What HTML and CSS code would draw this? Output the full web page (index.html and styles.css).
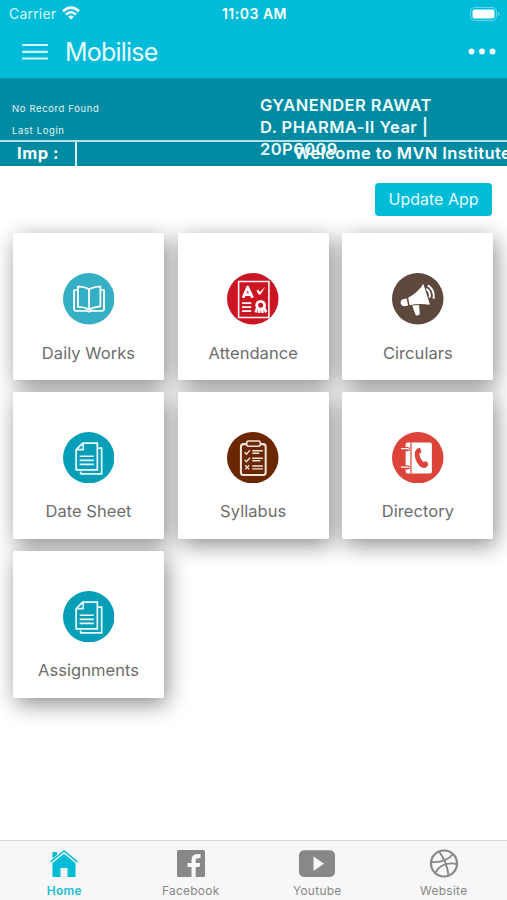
FILE: index.html
```html
<!DOCTYPE html>
<html lang="en">
<head>
<meta charset="utf-8">
<title>Mobilise</title>
<link rel="stylesheet" href="styles.css">
</head>
<body>
<div class="app">
  <header class="top">
    <div class="status">
      <div class="carrier"><span>Carrier</span>
        <svg width="18" height="14" viewBox="0 0 18 14" fill="none" stroke="#fff" stroke-width="2.5"><path d="M1 5.2Q9-2 17 5.2M4 8.5Q9 4 14 8.5"/><path d="M6.2 10.7Q9 8.300 11.800 10.700L9 13.600z" fill="#fff" stroke="none"/></svg>
      </div>
      <span class="clock">11:03 AM</span>
      <svg class="battery" width="30" height="14" viewBox="0 0 30 14"><rect x=".5" y=".5" width="26" height="13" rx="4" fill="none" stroke="#62d8e8"/><rect x="2.500" y="2.500" width="22" height="9" rx="2" fill="#fff"/><path d="M28 5v4q1.500-.5 1.500-2T28 5" fill="#62d8e8"/></svg>
    </div>
    <div class="bar">
      <svg width="26" height="18" viewBox="0 0 26 18" stroke="#d4f8fc" stroke-width="2.200" stroke-linecap="round"><path d="M1 2h24M1 8.800h24M1 15.500h24"/></svg>
      <h1>Mobilise</h1>
      <svg class="more" width="28" height="8" viewBox="0 0 28 8" fill="#fff"><circle cx="3.500" cy="3.500" r="2.900"/><circle cx="14" cy="3.500" r="2.900"/><circle cx="24.500" cy="3.500" r="2.900"/></svg>
    </div>
  </header>
  <section class="info">
    <div class="login"><span>No Record Found</span><span>Last Login</span></div>
    <div class="student"><span class="name">GYANENDER RAWAT</span><span class="course">D. PHARMA-II Year |</span><span class="roll">20P6009</span></div>
  </section>
  <section class="notice">
    <div class="imp">Imp :</div>
    <div class="ticker"><span>Welcome to MVN Institute</span></div>
  </section>
  <main>
    <button class="update">Update App</button>
    <div class="grid">
      <div class="card">
        <svg class="icon" viewBox="0 0 51 51"><circle cx="25.500" cy="25.500" r="25.500" fill="#34afc4"/><g fill="none" stroke="#fff" stroke-width="1.800" stroke-linejoin="round"><path d="M25.800 16Q20 13 14.800 13.500V33.500Q21 33.500 25.800 36Q31 33.500 37 33V13.200Q31 13.500 25.800 16V36M14 17h-3v19q0 1.500 1.500 1.500h11l2.300.8 2.300-.8h11q1.500 0 1.500-1.500V17H38"/></g></svg>
        <span>Daily Works</span>
      </div>
      <div class="card">
        <svg class="icon" viewBox="0 0 51 51"><circle cx="25.500" cy="25.500" r="25.500" fill="#cc1522"/><g fill="none" stroke="#fff"><path d="M11.500 8.500h30v35.500h-30z" stroke-width="1.500"/><path d="M16 24.500 20.500 14 25.300 24.500M18 21.500h5.500" stroke-width="2.800" stroke-linejoin="round"/><path d="M15 29.800h9M15 33.700h9M15 37.700h9" stroke-width="1.700"/><circle cx="33.300" cy="32" r="3.900" stroke-width="2.800"/><path d="M30 34.500l-1.800 4.500M31.800 36v3.500M36.800 34.500l2 4.500M35 36v3.500" stroke-width="2.500"/></g><path d="M29 17.500l2-.8 1.500 2 5.500-5-4.800 7.500h-1.700z" fill="#fff"/></svg>
        <span>Attendance</span>
      </div>
      <div class="card">
        <svg class="icon" viewBox="0 0 51 51"><circle cx="25.500" cy="25.500" r="25.500" fill="#5e483e"/><g fill="#fff"><path d="M16 24.500Q25 20 31 11.200L37.200 31.500Q27 29.500 17.500 32z"/><path d="M14.500 25.200l1.500 7-3.500.7Q9.500 33 8.700 30q-.6-3 2-4z"/><path d="M20 32.300l6.800-.5.700 8.700q-1 2-4 1.300z"/><path d="M30.500 11.500 36.800 31" stroke="#fff" stroke-width="1.200"/></g><path d="M34 15.700Q38.500 18.500 37.200 24.500M35.500 12.300Q42.500 16.500 41.200 25.500" fill="none" stroke="#fff" stroke-width="1.900"/></svg>
        <span>Circulars</span>
      </div>
      <div class="card">
        <svg class="icon" viewBox="0 0 51 51"><circle cx="25.500" cy="25.500" r="25.500" fill="#079eb8"/><g fill="none" stroke="#e8fbfd" stroke-width="1.700"><path d="M19.500 11h14.500v26.500H13V17.500zM20 11v6.500h-7M16.500 24h14M16.500 28h14M16.500 32h14M35 16h3.300v25.500H17.500V39"/></g></svg>
        <span>Date Sheet</span>
      </div>
      <div class="card">
        <svg class="icon" viewBox="0 0 51 51"><circle cx="25.500" cy="25.500" r="25.500" fill="#6b2702"/><g fill="none" stroke="#f4e4dc"><rect x="13.800" y="12" width="24.500" height="30.500" rx="2.500" stroke-width="2"/><rect x="19.500" y="9" width="13.500" height="5" rx="1.800" fill="#6b2702" stroke-width="1.500"/><path d="M17.500 20l1.800 2 3.500-4M17.500 27.500l1.800 2 3.500-4M18 33l4 4M22 33l-4 4" stroke-width="1.300"/><path d="M25 18.500h10.500M25 21h7M25 26h10.500M25 28.500h8M25 33.700h10.500M25 36.500h10.500" stroke-width="1.400"/></g></svg>
        <span>Syllabus</span>
      </div>
      <div class="card">
        <svg class="icon" viewBox="0 0 51 51"><circle cx="25.500" cy="25.500" r="25.500" fill="#dd4439"/><path d="M15.500 10.500h22q2 0 2 2V39q0 2-2 2h-22q-2 0-2-2V12.500q0-2 2-2" fill="#fff"/><path d="M18.800 10.500V41" stroke="#dd4439" stroke-width="1.200"/><g fill="#dd4439"><path d="M12 14.800h3q3 0 3 2.200t-3 2h-3zM12 33h3q3 0 3 2.200t-3 2h-3z"/><path d="M25 16.300l2.500-.6q1.700 2 1.500 4.500l-2 1.700q.5 4.500 3.800 7.800l3-.7q2.500 1.300 2 4l-2.500 2.500Q27 36.500 23.500 27.500 21 20 25 16.300"/></g><path d="M9 16.500h6q2 0 2 1M9 34.700h6q2 0 2 1" fill="none" stroke="#fff" stroke-width="1.300"/></svg>
        <span>Directory</span>
      </div>
      <div class="card">
        <svg class="icon" viewBox="0 0 51 51"><circle cx="25.500" cy="25.500" r="25.500" fill="#079eb8"/><g fill="none" stroke="#e8fbfd" stroke-width="1.700"><path d="M19.500 11h14.500v26.500H13V17.500zM20 11v6.500h-7M16.500 24h14M16.500 28h14M16.500 32h14M35 16h3.300v25.500H17.500V39"/></g></svg>
        <span>Assignments</span>
      </div>
    </div>
  </main>
  <nav>
    <a class="active"><svg width="30" height="30" viewBox="0 0 30 30" fill="#00bcd6"><path d="M3.500 3H8v4.500L3.500 11z"/><path d="M3.500 14 15 4.800 26.500 14v14H18.500V19h-7v9H4.300q-.8 0-.8-.8z"/><path d="M1.500 13.200 15 2.200l13.500 11" fill="none" stroke="#f7f7f7" stroke-width="3"/><path d="M1.700 12.800 15 2l13.300 10.800" fill="none" stroke="#00bcd6" stroke-width="1.500"/></svg><span>Home</span></a>
    <a><svg width="30" height="30" viewBox="0 0 30 30"><rect x="1" y="1" width="28" height="27" rx="1.500" fill="#888"/><path d="M15.500 28V18h-4v-4h4v-3q0-6 6-6h3v4.200h-2.500q-2.300 0-2.300 2V14h4.500l-.7 4h-3.800v10z" fill="#f7f7f7"/></svg><span>Facebook</span></a>
    <a><svg width="38" height="30" viewBox="0 0 38 30"><rect x="1" y="1.300" width="36" height="26.700" rx="5" fill="#888"/><path d="M15.500 7.500v14.500L26 14.800z" fill="#f7f7f7"/></svg><span>Youtube</span></a>
    <a><svg width="30" height="30" viewBox="0 0 30 30" fill="none" stroke="#888" stroke-width="1.900"><circle cx="15" cy="14.500" r="13" stroke-width="2.200"/><path d="M10 2.500Q18 13 19.500 26.500M2 13Q17 14 24 5M6 24Q13 12 28 15"/></svg><span>Website</span></a>
  </nav>
</div>
</body>
</html>
```

FILE: styles.css
```css
* { box-sizing: border-box; }
body { margin: 0; background: #fff; font-family: Inter, "Liberation Sans", sans-serif; color: #fff; }
svg { display: block; flex: none; }
.app { display: flex; flex-direction: column; width: 507px; height: 900px; overflow: hidden; }
.top { height: 78px; background: #00bcd9; }
.status { display: grid; grid-template-columns: 1fr auto 1fr; align-items: center; height: 28px; padding: 0 7px 0 9px; font-size: 14px; line-height: 28px; }
.carrier { display: flex; align-items: center; gap: 6px; color: #d4f8fc; letter-spacing: .2px; }
.carrier svg { margin-bottom: 2px; }
.clock { font-weight: 600; font-size: 14px; letter-spacing: .5px; }
.battery { justify-self: end; margin-bottom: 1px; }
.bar { display: flex; align-items: center; height: 48px; padding: 0 11px 0 22px; }
h1 { margin: 0 auto 0 17px; font-size: 25px; font-weight: 400; line-height: 48px; letter-spacing: -.8px; color: #e6fbfd; }
.info { display: flex; height: 62px; padding: 16px 0 0 12px; background: #008ba3; border-top: 1px solid #009ab4; }
.login { display: flex; flex-direction: column; width: 248px; padding-top: 3px; font-size: 9.5px; line-height: 22px; letter-spacing: .63px; color: #e0f4f7; }
.student { display: flex; flex-direction: column; height: 66px; font-size: 16.5px; font-weight: 600; line-height: 22px; letter-spacing: .45px; white-space: nowrap; z-index: 1; margin-top: -1px; color: #ecfbfd; }
.notice { display: flex; height: 26px; background: #008ba3; border-top: 2px solid #b5e1e8; font-size: 16.5px; font-weight: 700; line-height: 22px; }
.imp { width: 77px; padding-left: 17px; border-right: 2px solid #d2edf1; letter-spacing: .5px; }
.ticker { flex: 1; padding-left: 217px; overflow: hidden; white-space: nowrap; font-weight: 600; letter-spacing: .4px; z-index: 1; }
main { flex: 1; display: flex; flex-direction: column; padding: 17px 14px 0 13px; }
.update { align-self: flex-end; margin-right: 1px; width: 117px; height: 33px; padding: 0; border: 0; border-radius: 4px; background: #00bcd9; color: #e4fafd; font: 16px/33px Inter, sans-serif; z-index: 1; }
.grid { display: grid; isolation: isolate; grid-template-columns: repeat(3, 151px); grid-auto-rows: 147px; column-gap: 13.7px; row-gap: 11.8px; margin-top: 17px; }
.card { position: relative; display: flex; flex-direction: column; align-items: center; padding-top: 40px; background: #fff; border-radius: 2px; color: #6d6d6d; font-size: 16.5px; letter-spacing: .05px; line-height: 24px; white-space: nowrap; }
.card::before { content: ""; position: absolute; inset: 0; z-index: -1; border-radius: 2px; box-shadow: 3px 6px 22px rgba(0,0,0,.45); }
.icon { width: 51.5px; height: 51.5px; margin-bottom: 16px; }
nav { display: grid; grid-template-columns: repeat(4, 1fr); height: 60px; padding-left: 1px; background: #f7f7f7; border-top: 1px solid #d8d8d8; font-size: 11.9px; letter-spacing: .3px; color: #888; z-index: 1; }
nav a { display: flex; flex-direction: column; align-items: center; padding-top: 8px; line-height: 24px; }
nav .active { color: #22bdd2; font-weight: 600; }
```
